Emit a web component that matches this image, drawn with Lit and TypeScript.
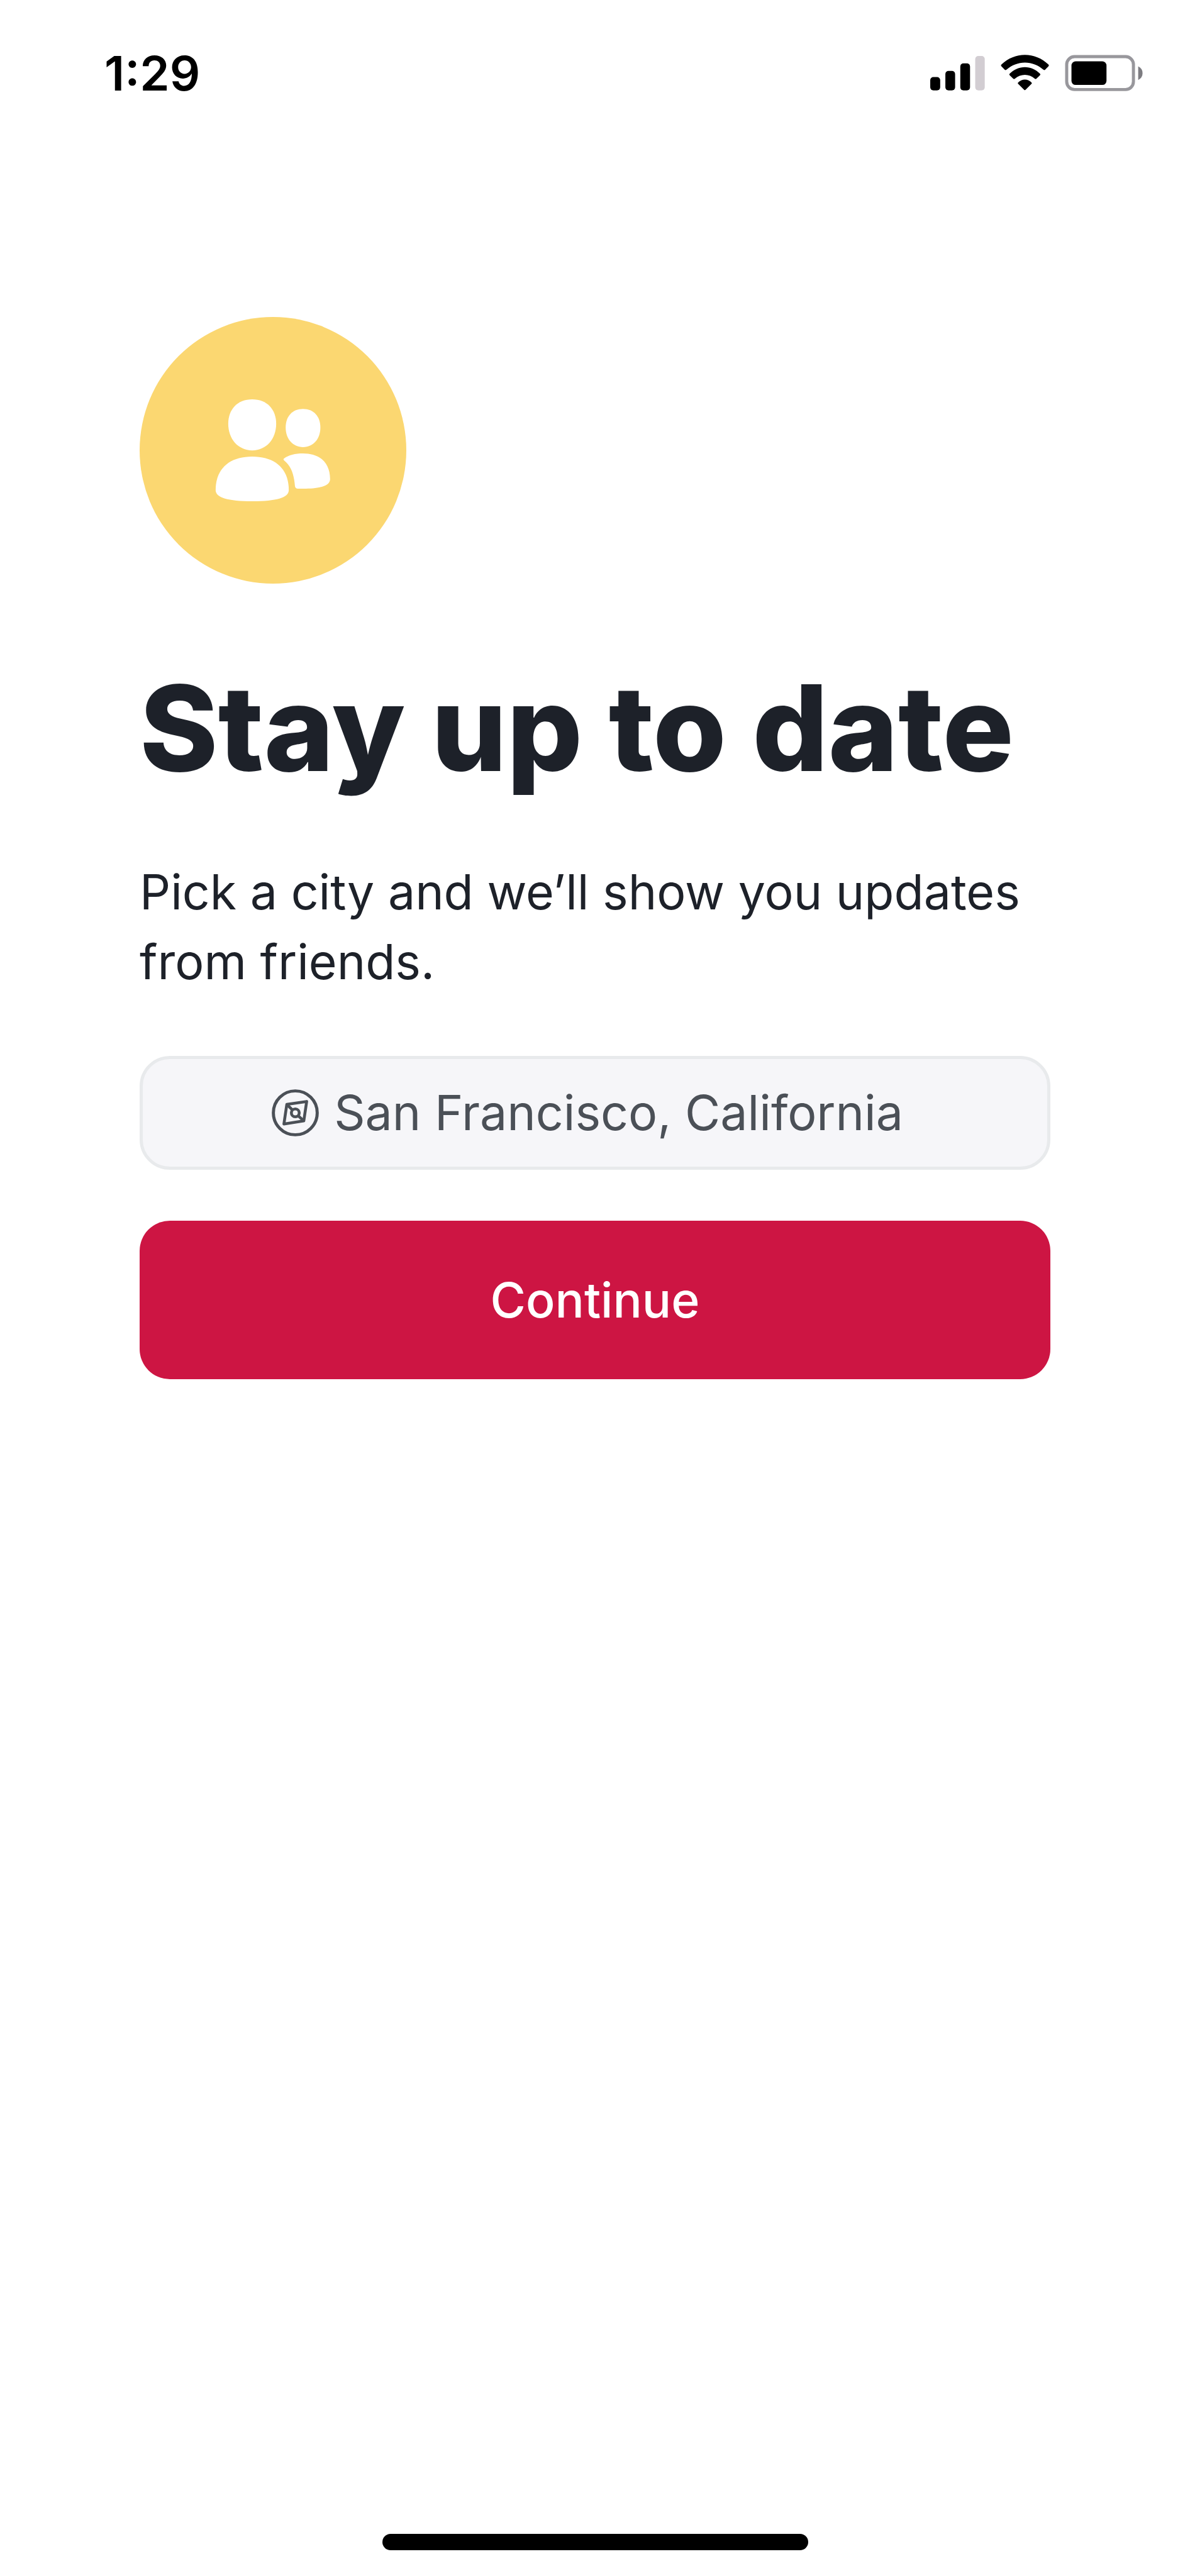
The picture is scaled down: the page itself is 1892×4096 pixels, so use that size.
import { LitElement, html, css, svg } from 'lit';
import { customElement, state } from 'lit/decorators.js';

const peopleIcon = svg`
	<path d="M591 464C662 464 707 512 707 582C707 655 660 711 591 711C522 711 475 655 475 582C475 512 520 464 591 464Z" />
	<path d="M591 741C702 741 768 800 768 903C768 940 708 957 591 957C474 957 414 940 414 903C414 800 480 741 591 741Z" />
	<path d="M837 510C889 510 921 546 921 600C921 655 887 695 837 695C787 695 753 655 753 600C753 546 785 510 837 510Z" />
	<path d="M745 750C768 734 798 726 837 726C922 726 968 774 968 850C968 881 925 896 837 896L812 896Q800 896 798 885C793 825 780 787 745 759Q740 754 745 750Z" />
`;

@customElement('status-bar')
export class StatusBar extends LitElement {
	static styles = css`
		:host {
			display: flex;
			justify-content: space-between;
			align-items: center;
			padding: 87px 74px 0 166px;
			color: #000;
		}
		.time {
			font-size: 76px;
			line-height: 58px;
			font-weight: 600;
		}
		.icons {
			display: flex;
			gap: 25px;
		}
		svg {
			display: block;
			height: 58px;
		}
	`;

	render() {
		return html`
			<span class="time">1:29</span>
			<div class="icons">
				<svg viewBox="69 84 264 176" role="img" aria-label="Signal">
					<rect x="69" y="192" width="48" height="64" rx="15" />
					<rect x="142" y="162" width="47" height="94" rx="15" />
					<rect x="214" y="126" width="47" height="130" rx="15" />
					<rect x="286" y="90" width="46" height="166" rx="15" fill="#d2cdd2" />
				</svg>
				<svg viewBox="410 84 234 176" role="img" aria-label="Wi-Fi">
					<path d="M413 132C477 69 577 69 641 132Q644 136 641 139L624 157Q621 160 617 157C565 110 489 110 437 157Q433 160 430 157L413 139Q410 136 413 132Z" />
					<path d="M453 176C494 133 560 133 600 176Q603 180 600 183L582 200Q579 203 575 200C547 175 507 175 478 200Q475 203 471 200L453 183Q450 180 453 176Z" />
					<path d="M494 218C512 199 542 199 559 218Q562 221 559 224L530 253Q526 257 523 253L494 224Q491 221 494 218Z" />
				</svg>
				<svg viewBox="720 84 378 176" role="img" aria-label="Battery">
					<rect x="729" y="93" width="322" height="159" rx="38" fill="none" stroke="#98979c" stroke-width="15" />
					<rect x="752" y="116" width="169" height="114" rx="20" />
					<path d="M1074 140Q1095 150 1095 173Q1095 196 1074 206Z" fill="#7d7c81" />
				</svg>
			</div>
		`;
	}
}

@customElement('app-root')
export class AppRoot extends LitElement {
	static styles = css`
		:host {
			display: flex;
			flex-direction: column;
			box-sizing: border-box;
			min-height: 100vh;
			padding-bottom: 41px;
			background: #fff;
			color: #1d2129;
			font-family: Inter, 'Liberation Sans', sans-serif;
		}
		main {
			flex: 1;
			display: flex;
			flex-direction: column;
			padding: 359px 222px 0;
		}
		.badge {
			width: 424px;
			height: 424px;
			border-radius: 50%;
			background: #fbd771;
			fill: #fff;
		}
		.badge svg {
			display: block;
		}
		h1 {
			margin: 130px 0 0;
			font-size: 189px;
			line-height: 200px;
			font-weight: 800;
		}
		p {
			margin: 105px 0 0;
			font-size: 77px;
			line-height: 111px;
		}
		.city {
			display: flex;
			justify-content: center;
			align-items: center;
			gap: 24px;
			box-sizing: border-box;
			height: 181px;
			margin-top: 94px;
			padding-right: 24px;
			border: 5px solid #e8eaec;
			border-radius: 48px;
			background: #f6f6f9;
			color: #4b5057;
		}
		.city svg {
			flex: none;
			width: 75px;
			height: 75px;
			fill: none;
			stroke: currentColor;
		}
		.city input {
			field-sizing: content;
			padding: 0;
			border: 0;
			outline: 0;
			background: none;
			color: inherit;
			font: inherit;
			font-size: 77px;
			line-height: 111px;
		}
		.continue {
			height: 252px;
			margin-top: 81px;
			border: 0;
			border-radius: 48px;
			background: #cd1543;
			color: #fff;
			font: inherit;
			font-size: 77px;
			font-weight: 500;
		}
		.home-indicator {
			align-self: center;
			width: 677px;
			height: 26px;
			border-radius: 13px;
			background: #000;
		}
	`;

	@state() private city = 'San Francisco, California';

	private onCityInput(e: Event) {
		this.city = (e.target as HTMLInputElement).value;
	}

	render() {
		return html`
			<status-bar></status-bar>
			<main>
				<div class="badge">
					<svg viewBox="46 65 1291 1291" aria-hidden="true">${peopleIcon}</svg>
				</div>
				<h1>Stay up to date</h1>
				<p>Pick a city and we’ll show you updates from friends.</p>
				<label class="city">
					<svg viewBox="700 237 228 228" aria-hidden="true">
						<circle cx="814" cy="351" r="106" stroke-width="15" />
						<path d="M773 310L869 296L855 390L759 405Z" stroke-width="14" stroke-linejoin="round" />
						<circle cx="814" cy="351" r="19" stroke-width="14" />
						<path d="M773 310L801 338M828 365L855 390" stroke-width="14" />
					</svg>
					<input type="text" aria-label="City" .value=${this.city} @input=${this.onCityInput} />
				</label>
				<button class="continue" type="button">Continue</button>
			</main>
			<div class="home-indicator"></div>
		`;
	}
}
